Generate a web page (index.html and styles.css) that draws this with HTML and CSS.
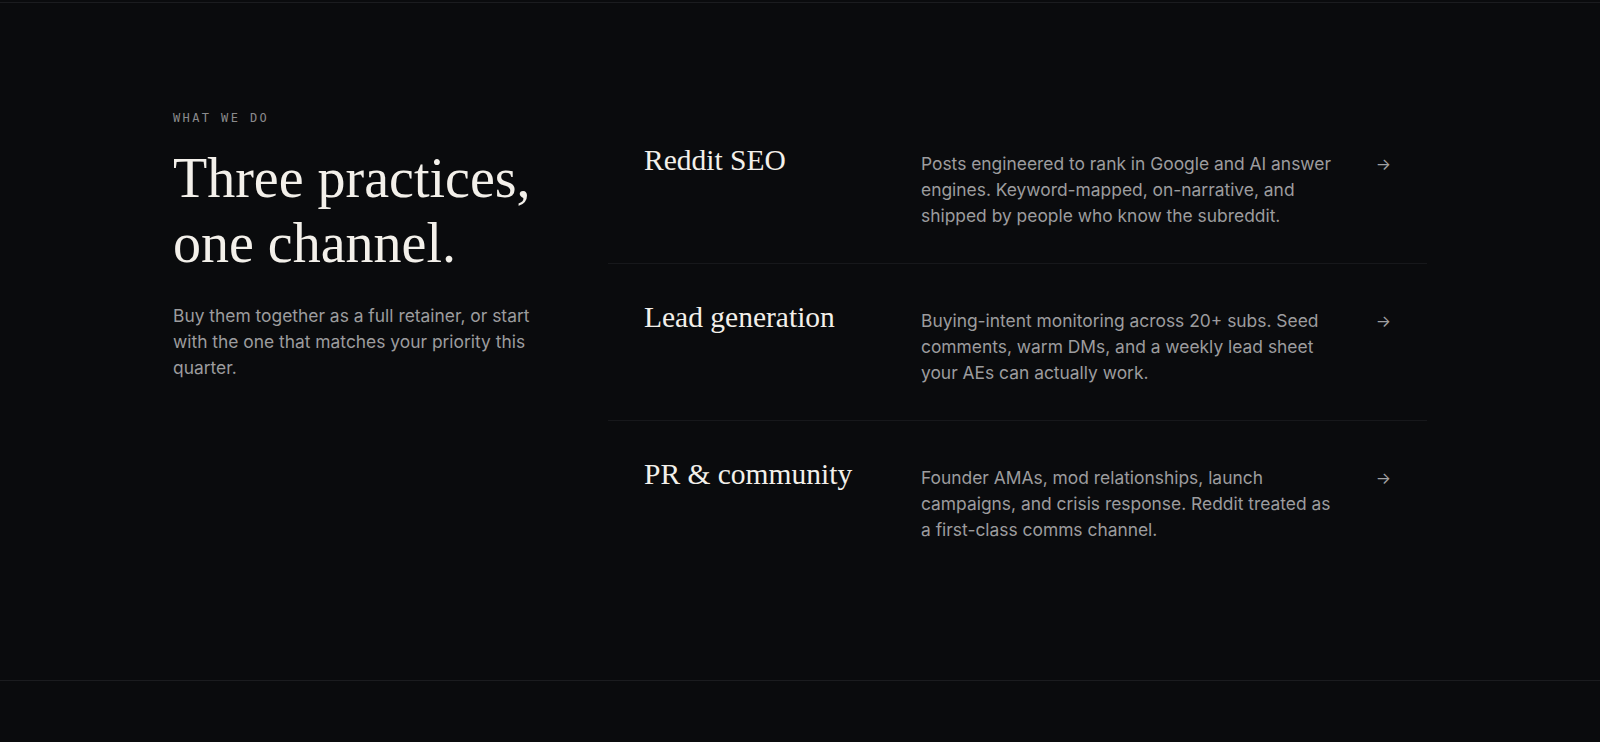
FILE: index.html
```html
<!DOCTYPE html>
<html lang="en">
<head>
    <meta charset="UTF-8">
    <meta name="viewport" content="width=device-width, initial-scale=1.0">
    <title>What we do</title>
    <link rel="stylesheet" href="styles.css">
</head>
<body>
    <section class="services">
        <div class="w">
            <!-- 左侧：标题和简介 -->
            <div class="intro">
                <p class="eyebrow">WHAT WE DO</p>
                <h2>Three practices, one channel.</h2>
                <p class="lead">Buy them together as a full retainer, or start with the one that matches your priority this quarter.</p>
            </div>
            <!-- 右侧：三项服务 -->
            <ul class="practices">
                <li>
                    <h3>Reddit SEO</h3>
                    <p>Posts engineered to rank in Google and AI answer engines. Keyword-mapped, on-narrative, and shipped by people who know the subreddit.</p>
                    <span class="arrow">&rarr;</span>
                </li>
                <li>
                    <h3>Lead generation</h3>
                    <p>Buying-intent monitoring across 20+ subs. Seed comments, warm DMs, and a weekly lead sheet your AEs can actually work.</p>
                    <span class="arrow">&rarr;</span>
                </li>
                <li>
                    <h3>PR &amp; community</h3>
                    <p>Founder AMAs, mod relationships, launch campaigns, and crisis response. Reddit treated as a first-class comms channel.</p>
                    <span class="arrow">&rarr;</span>
                </li>
            </ul>
        </div>
    </section>
    <div class="next"></div>
</body>
</html>
```

FILE: styles.css
```css
*{
    margin: 0;
    padding: 0;
    box-sizing: border-box;
}

ul{
    list-style: none;
}

body{
    background: #0a0b0d;
    font-family: Inter, "Liberation Sans", sans-serif;
    padding-top: 2px;
}

.services{
    border-top: 1px solid #1b1c1f;
    border-bottom: 1px solid #1b1c1f;
    padding: 103px 0 103px;
}

.w{
    width: 1254px;
    margin: 0 auto;
    display: grid;
    grid-template-columns: 435px 1fr;
    align-items: start;
}

.intro{
    padding-top: 4px;
}

.eyebrow{
    font: 12px/16px "DejaVu Sans Mono", "Liberation Mono", monospace;
    letter-spacing: 0.2em;
    color: #8a8a8c;
}

.intro h2{
    margin-top: 20px;
    max-width: 380px;
    font: 400 56px/65px "Liberation Serif", "DejaVu Serif", serif;
    color: #f3f0ea;
}

.lead{
    margin-top: 27px;
    max-width: 370px;
    font-size: 17.4px;
    line-height: 26px;
    color: #9c9c9e;
}

.practices{
    margin-top: 2px;
}

.practices li{
    display: grid;
    grid-template-columns: 277px 1fr 24px;
    align-items: baseline;
    padding: 35px 36px 34px;
    border-bottom: 1px solid #17181b;
}

.practices li + li{
    padding-top: 36px;
}

.practices li:last-child{
    border-bottom: none;
}

.practices h3{
    font: 400 29.5px/1.2 "Liberation Serif", "DejaVu Serif", serif;
    color: #f3f0ea;
}

.practices p{
    max-width: 420px;
    font-size: 17.4px;
    line-height: 26px;
    color: #9c9c9e;
}

.practices .arrow{
    justify-self: end;
    font-size: 16px;
    color: #a0a0a2;
}

.next{
    height: 60px;
}
```
